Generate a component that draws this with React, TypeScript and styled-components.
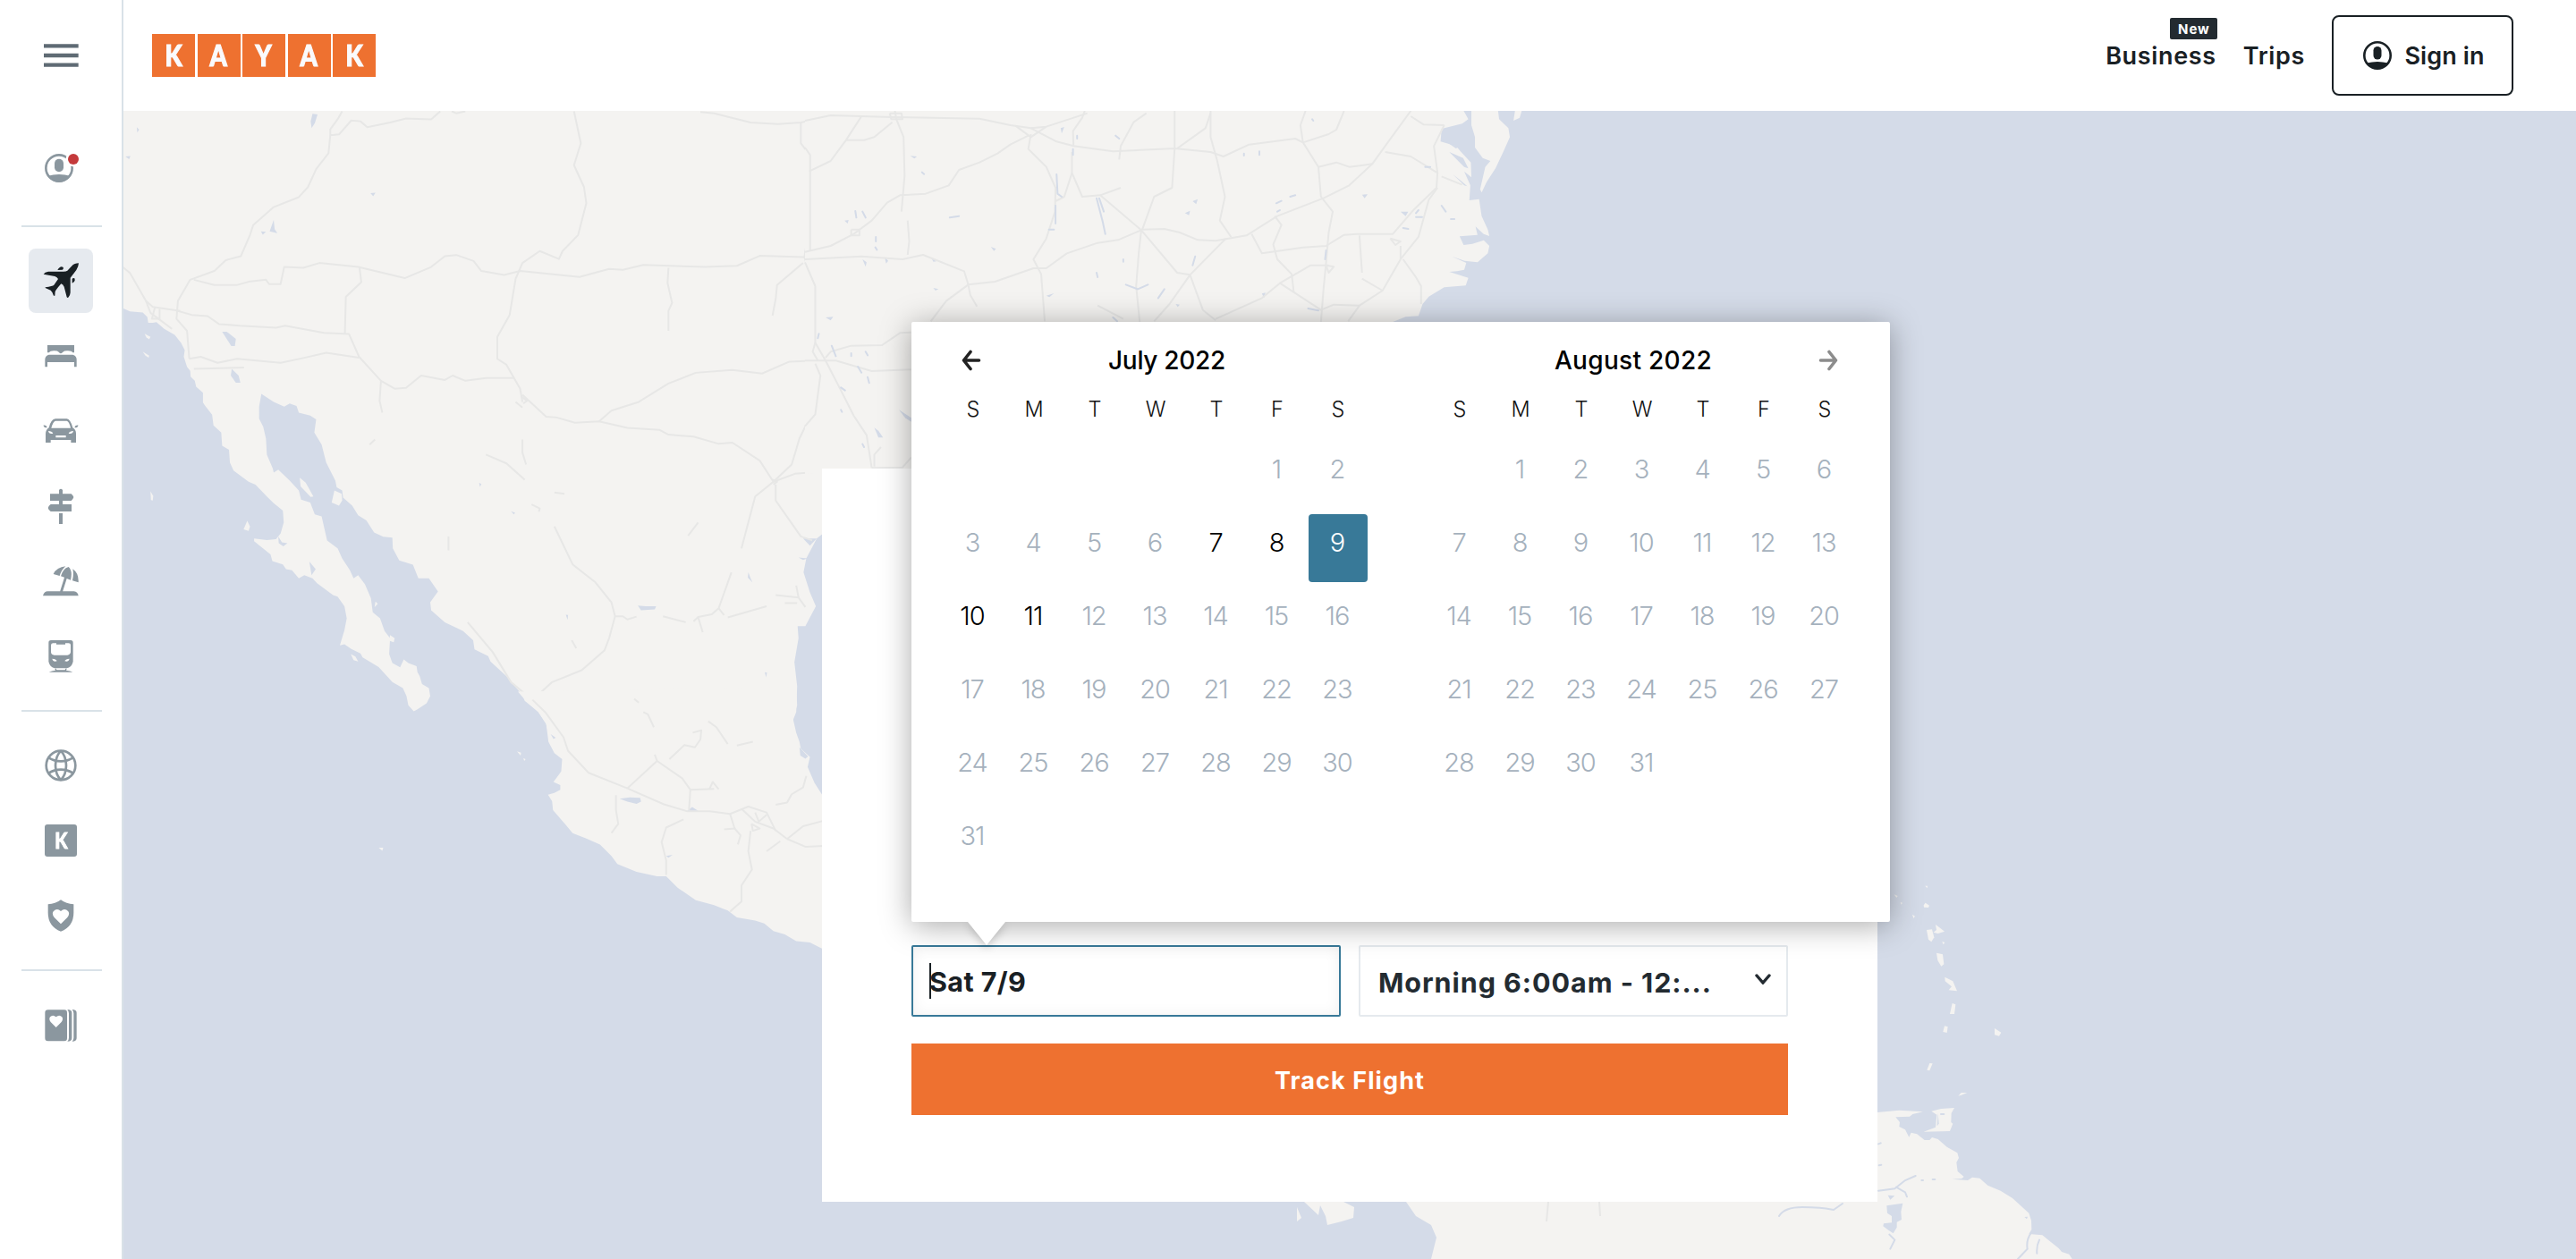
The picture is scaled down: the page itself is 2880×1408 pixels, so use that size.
import React from "react";
import styled, { createGlobalStyle } from "styled-components";

const GlobalStyle = createGlobalStyle`
  *, *::before, *::after { box-sizing: border-box; }
  html, body { margin: 0; padding: 0; background: #fff; }
  body { font-family: Inter, "Liberation Sans", sans-serif; color: #192024; }
  button, a, input { font-family: inherit; color: inherit; text-decoration: none; }
`;

const slate = "#8b979f";

/* ---------- shell ---------- */

const Page = styled.div`
  display: flex;
  width: 2880px;
  height: 1408px;
  overflow: hidden;
`;

const Sidebar = styled.nav`
  flex: none;
  width: 138px;
  border-right: 2px solid #d9e2e8;
  background: #fff;
  display: flex;
  flex-direction: column;
  align-items: center;
`;

const MenuButton = styled.button`
  display: flex;
  align-items: center;
  justify-content: center;
  width: 72px;
  height: 72px;
  margin: 26px 0 54px;
  padding: 0;
  border: 0;
  background: none;
`;

const NavItem = styled.a<{ $active?: boolean }>`
  display: flex;
  align-items: center;
  justify-content: center;
  width: 72px;
  height: 72px;
  border-radius: 8px;
  color: ${(p) => (p.$active ? "#192024" : slate)};
  background: ${(p) => (p.$active ? "#e6eaef" : "transparent")};
`;

const NavGroup = styled.div`
  display: flex;
  flex-direction: column;
  gap: 12px;
`;

const Rule = styled.hr<{ $top?: number }>`
  width: 90px;
  height: 2px;
  flex: none;
  margin: ${(p) => p.$top ?? 24}px 0 24px 2px;
  border: 0;
  background: #d9e2e8;
`;

const Glyph = styled.svg`
  display: block;
  width: 40px;
  height: 40px;
  fill: currentColor;
`;

const Letter = styled.b<{ $stroke: number }>`
  display: block;
  font-weight: 900;
  transform: scaleX(0.86);
  -webkit-text-stroke: ${(p) => p.$stroke}px currentColor;
`;

const LetterTile = styled.span`
  display: flex;
  align-items: center;
  justify-content: center;
  width: 36px;
  height: 36px;
  border-radius: 3px;
  background: ${slate};
  color: #fff;
  font: 900 24px/36px Lato, sans-serif;
`;

const Main = styled.div`
  flex: 1;
  display: flex;
  flex-direction: column;
`;

/* ---------- header ---------- */

const Header = styled.header`
  flex: none;
  display: flex;
  align-items: center;
  justify-content: space-between;
  height: 124px;
  padding: 0 70px 0 32px;
  background: #fff;
`;

const Logo = styled.a`
  display: flex;
  gap: 2.5px;
`;

const LogoTile = styled.span`
  display: flex;
  align-items: center;
  justify-content: center;
  width: 48px;
  height: 48px;
  background: #ee7130;
  color: #fafafc;
  font: 900 32px/48px Lato, sans-serif;
`;

const HeaderNav = styled.div`
  display: flex;
  align-items: center;
`;

const HeaderLink = styled.a`
  position: relative;
  margin-right: 30px;
  padding-top: 2px;
  font-size: 27px;
  font-weight: 600;
  line-height: 40px;
  letter-spacing: 0.65px;
`;

const NewBadge = styled.span`
  position: absolute;
  right: -1px;
  top: -21px;
  padding: 0 8px 0 9px;
  height: 24px;
  border-radius: 2px;
  background: #232b31;
  color: #fff;
  font-size: 15px;
  font-weight: 700;
  line-height: 25px;
  letter-spacing: 0.9px;
`;

const SignIn = styled.button`
  display: flex;
  align-items: center;
  justify-content: center;
  gap: 14px;
  width: 203px;
  height: 90px;
  padding: 0 0 0 3px;
  border: 2px solid #192024;
  border-radius: 8px;
  background: #fff;
  font-size: 27px;
  font-weight: 600;
  letter-spacing: 0.1px;
`;

const SignInIcon = styled.svg`
  width: 32px;
  height: 32px;
  flex: none;
`;

/* ---------- map ---------- */

const Stage = styled.main`
  position: relative;
  flex: 1;
  display: flex;
  justify-content: center;
  align-items: flex-start;
  padding-top: 400px;
  overflow: hidden;
  background: #d4dbe8;
`;

const MapCanvas = styled.svg`
  position: absolute;
  inset: 0;
  width: 2742px;
  height: 1284px;
  .land { fill: #f4f3f1; }
  .water { fill: #d4dbe8; }
  .road { fill: none; stroke: #e7e7e6; stroke-width: 2px; stroke-linejoin: round; vector-effect: non-scaling-stroke; }
  .stream { fill: none; stroke: #d4dbe8; stroke-width: 2px; stroke-linecap: round; vector-effect: non-scaling-stroke; }
`;

/* ---------- form ---------- */

const Card = styled.section`
  position: relative;
  width: 1180px;
  height: 820px;
  padding: 533px 100px 0;
  background: #fff;
`;

const Fields = styled.div`
  display: flex;
  gap: 20px;
  margin-bottom: 30px;
`;

const FieldWrap = styled.div`
  position: relative;
  width: 480px;
`;

const DateBox = styled.div`
  display: flex;
  align-items: center;
  height: 80px;
  padding: 0 18px;
  border: 2px solid #387998;
  border-radius: 2px;
  background: #fff;
  box-shadow: inset 0 0 16px rgba(0, 0, 0, 0.06);
  font-size: 30.5px;
  font-weight: 700;
  letter-spacing: 0.4px;
`;

const Caret = styled.i`
  width: 2px;
  height: 40px;
  margin-right: -2px;
  background: #192024;
`;

const SelectBox = styled.div`
  display: flex;
  align-items: center;
  justify-content: space-between;
  width: 480px;
  height: 80px;
  padding: 3px 17px 0 20px;
  border: 2px solid #e5eaee;
  border-radius: 2px;
  font-size: 30.5px;
  font-weight: 700;
  letter-spacing: 0.95px;
  color: #232b31;
  white-space: nowrap;
`;

const Chevron = styled.svg`
  width: 18px;
  height: 12px;
  margin-top: -7px;
`;

const Submit = styled.button`
  display: block;
  width: 980px;
  height: 80px;
  padding: 2px 0 0;
  border: 0;
  background: #ee7130;
  color: #fff;
  font-size: 27px;
  font-weight: 700;
  letter-spacing: 1.1px;
`;

/* ---------- calendar ---------- */

const Popup = styled.div`
  position: absolute;
  left: 0;
  bottom: 106px;
  z-index: 2;
  display: flex;
  gap: 68px;
  width: 1094px;
  height: 671px;
  padding: 23px 39px 0 35px;
  border-radius: 2px;
  background: #fff;
  box-shadow: 0 4px 34px rgba(0, 0, 0, 0.34);
`;

const Pointer = styled.svg`
  position: absolute;
  left: 63px;
  bottom: -26px;
  width: 42px;
  height: 26px;
  overflow: visible;
  filter: drop-shadow(0 3px 5px rgba(0, 0, 0, 0.2));
  clip-path: polygon(-40px 0, 82px 0, 82px 60px, -40px 60px);
`;

const Month = styled.div`
  width: 476px;
`;

const MonthBar = styled.div<{ $side: "left" | "right" }>`
  display: flex;
  flex-direction: ${(p) => (p.$side === "left" ? "row" : "row-reverse")};
  align-items: center;
  height: 40px;
  padding: ${(p) => (p.$side === "left" ? "0 18px 0 21px" : "0 19px 0 21px")};
`;

const MonthName = styled.h3<{ $wide?: boolean }>`
  flex: 1;
  margin: 0;
  font-size: 28px;
  font-weight: 500;
  letter-spacing: ${(p) => (p.$wide ? 0.3 : -0.3)}px;
  color: #000;
  text-align: center;
`;

const ArrowIcon = styled.svg<{ $muted?: boolean }>`
  width: 22px;
  height: 24px;
  flex: none;
  fill: none;
  stroke: ${(p) => (p.$muted ? "#8c8c8c" : "#222")};
  stroke-width: 3.6px;
  stroke-linecap: round;
  stroke-linejoin: round;
`;

const WeekRow = styled.div`
  display: grid;
  grid-template-columns: repeat(7, 68px);
  height: 70px;
  padding-top: 20px;
  color: #111;
  font-size: 23.5px;
  font-weight: 300;
  line-height: 30px;
  text-align: center;
`;

const Days = styled.div`
  display: grid;
  grid-template-columns: repeat(7, 68px);
  grid-auto-rows: 76px;
  row-gap: 6px;
`;

type Tone = "muted" | "open" | "picked";

const Day = styled.span<{ $tone: Tone }>`
  margin: 0 1px;
  padding: 12px 2px 0 0;
  border-radius: 4px;
  background: ${(p) => (p.$tone === "picked" ? "#387998" : "transparent")};
  color: ${(p) => (p.$tone === "picked" ? "#fff" : p.$tone === "open" ? "#000" : "#a5b1bd")};
  font-size: 29px;
  font-weight: 300;
  line-height: 40px;
  letter-spacing: -1px;
  text-align: center;
`;

const WEEK = ["S", "M", "T", "W", "T", "F", "S"];

function Calendar(props: { name: string; offset: number; count: number; open?: number[]; picked?: number; side: "left" | "right" }) {
  const { name, offset, count, open = [], picked, side } = props;
  return (
    <Month>
      <MonthBar $side={side}>
        <ArrowIcon viewBox="0 0 22 24" $muted={side === "right"}>
          {side === "left" ? <path d="M19.5 12H2.5M10 2.5L2.5 12l7.500 9.500" /> : <path d="M2.500 12h17M12 2.500l7.500 9.500-7.500 9.500" />}
        </ArrowIcon>
        <MonthName $wide={side === "right"}>{name}</MonthName>
      </MonthBar>
      <WeekRow>{WEEK.map((d, i) => <span key={i}>{d}</span>)}</WeekRow>
      <Days>
        {Array.from({ length: offset }, (_, i) => <span key={"b" + i} />)}
        {Array.from({ length: count }, (_, i) => i + 1).map((n) => (
          <Day key={n} $tone={n === picked ? "picked" : open.includes(n) ? "open" : "muted"}>{n}</Day>
        ))}
      </Days>
    </Month>
  );
}

/* ---------- icons ---------- */

const icons: Record<string, React.ReactNode> = {
  flights: (
    <>
      <path d="M120 1Q106 1 96 11L82 26Q78 29 69 29H18Q6 31 2 38L40 45Q48 48 51 54L37 74Q33 78 8 82V84L26 92Q32 97 36 110H40L41 97Q42 92 61 70Q68 72 71 80L80 115Q83 119 86 115Q91 110 92 100V50L112 24Q119 14 120 1Z" />
      <path d="M49 24Q56 13 62 13 69 13 69 18L66 23ZM98 68V53Q102 50 106 52 109 58 105 63Z" />
    </>
  ),
  stays: <path d="M15 24H105V49H100Q97 43 84 43 72 42 67 47 62 52 60 52 57 52 53 47 48 42 36 43 24 43 20 49H15ZM20 56H100Q113 60 113 72V97H105V81H15V97H7V72Q7 60 20 56Z" />,
  cars: <path fillRule="evenodd" d="M20 49Q27 20 42 19H80Q92 20 100 49 111 56 111 68V99H94V90H26V99H9V70Q9 56 20 49ZM28 50H93Q88 28 80 26H42Q34 28 28 50ZM18 60Q20 71 34 68 30 60 18 60ZM102 60Q100 71 86 68 90 60 102 60ZM43 75V82H77V75ZM1 41Q12 38 14 48 6 52 1 41ZM119 41Q108 38 106 48 114 52 119 41Z" />,
  explore: <path d="M54 6Q60-2 66 6V19H95Q102 25 103 30 101 37 95 42H66V54H96V78H26Q18 72 17 66 19 59 26 54H54V42H24V19H54ZM54 84H66V120H54Z" />,
  packages: <path d="M35 36Q46 13 76 10 62 22 56 42ZM60 43Q67 17 86 12 100 24 93 56L80 51 66 95H57L72 47ZM99 58Q104 36 100 19 121 34 119 64ZM0 109Q4 94 16 94H104Q117 96 119 109Z" />,
  trains: <path fillRule="evenodd" d="M27 6H93Q101 6 101 14V78Q96 98 80 100H40Q24 98 19 78V14Q19 6 27 6ZM27 22V46Q28 56 38 56H82Q92 55 93 46V22Q93 16 86 16H75V20H45V16H34Q28 16 27 22ZM31 68Q34 80 47 76 44 68 31 68ZM89 68Q86 80 73 76 76 68 89 68ZM20 113Q30 108 42 107L40 101H44L46 106H74L76 101H80L78 107Q92 108 100 113Z" />,
  globe: (
    <g fill="none" stroke="currentColor" strokeWidth="8">
      <circle cx="60" cy="60" r="49" />
      <path d="M60 11Q42 30 42 60T60 109M60 11Q78 30 78 60T60 109M19 34Q38 46 60 46T101 34M19 86Q38 74 60 74T101 86" />
    </g>
  ),
  shield: <path fillRule="evenodd" d="M60 7Q78 21 103 22V50Q103 96 60 113 17 96 17 50V22Q42 21 60 7ZM60 88L82 66Q91 55 85 46 73 33 60 45 47 33 35 46 29 55 38 66Z" />,
  trips: <path fillRule="evenodd" d="M17 10H72Q81 10 81 20V105Q81 115 72 115H17Q7 115 7 105V20Q7 10 17 10ZM44 69L62 51Q69 42 64 34 55 24 44 34 33 24 24 34 19 42 26 51ZM82 9Q97 9 97 20V105Q97 116 82 116 87 110 87 104V22Q87 15 82 9ZM98 9Q113 9 113 20V105Q113 116 98 116 103 110 103 104V22Q103 15 98 9Z" />,
};

function Icon({ name }: { name: string }) {
  return <Glyph viewBox="0 0 120 120">{icons[name]}</Glyph>;
}

function AccountIcon() {
  return (
    <Glyph viewBox="0 0 120 120">
      <circle cx="54" cy="60" r="44" fill="none" stroke="currentColor" strokeWidth="8" />
      <rect x="39" y="29" width="30" height="44" rx="15" />
      <path d="M17 86Q34 81 54 81T91 86Q78 107 54 107T17 86Z" />
      <circle cx="102" cy="30" r="25" fill="#fff" />
      <circle cx="102" cy="30" r="18" fill="#c43a3b" />
    </Glyph>
  );
}

/* ---------- map geometry ---------- */

const pts = (list: string) => list.trim().split(/\s+/).join(" ");

interface Sheet {
  transform: string;
  land: string[];
  water: string[];
  roads: string[];
  streams?: string;
}

const sheets: Sheet[] = [
  {
    transform: "translate(130 120) scale(.5102 .44643)",
    land: [
      "14,0 14,503 30,511 58,514 68,525 70,540 80,540 88,538 105,555 128,570 142,590 150,608 148,625 155,650 162,660 163,675 172,685 175,700 190,715 190,740 195,748 210,770 213,797 230,815 232,848 247,858 249,890 257,910 290,938 305,945 330,975 345,992 365,1010 367,1040 360,1068 350,1082 330,1084 302,1080 302,1087 338,1120 342,1137 365,1145 372,1157 385,1160 400,1180 412,1172 430,1180 440,1192 475,1222 485,1226 500,1250 505,1280 500,1310 490,1348 500,1345 515,1357 535,1368 540,1378 575,1402 605,1440 628,1455 636,1475 640,1498 652,1513 660,1508 680,1493 688,1475 685,1455 670,1445 665,1425 660,1415 658,1400 640,1392 630,1383 622,1403 605,1392 598,1370 600,1330 588,1312 578,1280 562,1265 558,1230 545,1195 530,1172 520,1180 512,1160 495,1130 485,1105 462,1085 455,1050 450,1025 435,1020 425,990 405,983 400,960 380,935 355,908 345,915 343,905 330,870 328,830 322,800 313,780 313,750 318,718 345,738 368,750 380,742 395,748 400,765 425,772 438,782 434,815 450,845 460,890 480,935 483,952 495,960 497,978 517,998 530,1022 548,1035 565,1065 585,1076 605,1078 606,1105 620,1135 650,1146 662,1180 685,1180 705,1213 688,1240 690,1260 720,1290 760,1312 782,1335 785,1358 815,1375 820,1388 855,1425 890,1472 895,1487 925,1515 942,1545 947,1570 1485,1570 1483,1535 1490,1515 1492,1450 1486,1390 1495,1330 1493,1300 1510,1300 1533,1250 1520,1215 1506,1165 1512,1130 1535,1080 1568,1050 1568,0",
      "62,567 75,575 72,581 66,576",
      "58,612 72,622 71,627 64,622",
      "75,962 81,974 80,985 76,984",
      "287,1036 293,1050 290,1061 279,1057",
      "402,928 415,940 432,975 426,976 404,950",
      "478,960 494,968 495,985 488,998 472,990",
      "568,1238 573,1244 566,1252",
      "600,1322 610,1330 608,1340 598,1336",
      "514,1370 524,1376 530,1388 520,1385",
    ],
    water: [
      "430,16 441,18 435,40 428,52 426,35",
      "232,562 242,562 262,580 260,598 252,598",
      "253,655 268,672 272,690 262,690 251,672",
      "355,1075 363,1090 375,1092 366,1100 356,1092",
      "423,1138 437,1157 428,1172",
      "1143,1248 1160,1250 1183,1250 1180,1258 1150,1260",
      "345,282 347,305 353,315 336,311",
      "317,311 328,312 321,319",
      "1505,1080 1535,1080 1520,1098",
      "1495,1128 1515,1130 1505,1134",
      "795,940 800,944 797,951",
      "865,1012 874,1016 871,1020",
      "1385,1165 1390,1180 1394,1190 1384,1178",
      "985,1271 990,1272 989,1284",
      "1421,1415 1426,1416 1424,1428",
      "20,123 31,122 28,130",
      "45,50 50,56 46,63",
      "557,215 568,214 563,223",
    ],
    roads: [
      "495,10 485,30 469,55 469,70 488,68 515,33 535,35 550,50 600,38 635,28 690,30 710,10",
      "469,70 465,115 438,155 420,200 400,225 345,250 300,295 293,320 273,373 240,383 215,410 162,432 135,485 132,530 155,560 160,630",
      "170,432 215,445 265,445 290,437 328,432 335,443 360,443 368,400 410,402 445,390 530,400 632,428 690,400 720,373 745,370 783,385 800,410 850,420 885,410 1015,425 1080,405 1110,407 1155,395 1290,400 1360,397 1410,372 1505,375 1568,383",
      "1003,10 1018,90 1003,145 1025,200 1030,240 1012,320 978,360 970,380 928,360 890,390 875,430 862,520 835,575 835,630 855,645 885,705 890,738",
      "533,402 537,438 503,475 501,567",
      "135,510 165,520 200,523 225,543 270,547 350,552 370,547 455,565 510,568 532,625 580,685 577,735 583,765",
      "160,630 185,625 222,640 265,630 360,640 410,628 460,615 532,627",
      "580,685 610,705 635,703 668,672 720,683 737,672 765,685 810,678 870,678",
      "890,720 942,775 965,777 1005,790 1058,787 1120,803 1190,808 1210,820 1265,825 1320,843 1350,840 1410,885 1440,938 1487,918 1550,912",
      "1058,787 1085,760 1145,738 1210,692 1270,665 1350,658 1415,667 1475,637 1568,633",
      "1440,938 1400,975 1385,1040 1370,1105",
      "1445,945 1445,985 1500,1075 1525,1085",
      "1440,938 1480,895 1497,830 1535,740 1537,700 1522,650 1532,595 1532,470 1508,375 1520,290 1520,120 1500,90 1500,40",
      "1538,700 1552,680 1555,630 1532,590",
      "1520,160 1545,145 1568,120",
      "1508,362 1568,346",
      "1280,12 1310,15 1390,38 1450,42 1500,38 1568,22",
      "735,10 745,15 765,10",
      "1210,402 1208,440 1218,490 1210,510 1210,560",
      "1505,390 1448,445 1445,480 1438,522",
      "960,1050 1000,1145 1050,1190 1085,1240 1093,1275 1110,1275 1120,1283 1140,1276",
      "1093,1275 1080,1330 1070,1360 1020,1410 955,1440 912,1485",
      "1265,1288 1275,1277 1305,1270 1320,1255 1348,1165",
      "1275,1277 1285,1315",
      "1320,1255 1332,1272",
      "1198,1275 1248,1290",
      "1340,1278 1425,1250",
      "1445,1222 1495,1228 1510,1252",
      "1465,1242 1492,1242",
      "1490,1198 1495,1228",
      "770,1290 825,1365 865,1440 912,1485",
      "14,400 30,415 65,485 80,500 140,510",
      "65,485 75,515 122,555",
      "85,500 78,530 95,530 95,505",
      "170,655 280,652",
      "810,870 855,892 895,933",
      "890,832 890,865 898,895",
      "910,995 928,1005 926,1013",
      "960,965 982,968",
      "1253,1073 1275,1040",
      "728,1075 728,1110",
      "875,738 890,752",
      "555,845 567,832",
      "998,1335 1008,1355",
      "888,725 900,735 892,742",
      "1437,932 1448,938 1440,945",
    ],
  },
  {
    transform: "translate(130 600) scale(.5102)",
    land: [
      "880,340 895,357 925,385 942,410 947,450 960,475 977,488 975,515 958,538 973,545 973,555 960,562 946,566 955,580 957,600 985,632 1000,650 1030,662 1060,675 1085,700 1098,718 1140,735 1185,745 1205,745 1230,770 1270,797 1310,808 1340,820 1360,835 1400,842 1420,848 1440,865 1465,872 1490,887 1520,890 1550,905 1560,905 1560,580 1546,565 1530,540 1515,505 1520,483 1500,465 1497,450 1490,430 1483,400 1492,370 1490,330",
      "878,471 887,474 886,480",
      "892,486 897,488 894,492",
      "575,682 585,682 583,689",
    ],
    water: [
      "1103,575 1125,572 1148,573 1150,581 1140,586 1120,581",
      "1250,602 1262,593 1278,603",
      "1497,462 1516,482 1510,487 1499,480",
      "1205,700 1219,698 1210,704",
      "952,433 963,441 958,444",
    ],
    roads: [
      "912,358 940,385 980,440 990,470 1035,518 1120,552 1200,587 1250,602 1300,602 1345,608 1385,592 1425,605 1445,645",
      "1120,552 1185,492 1180,478",
      "1185,492 1240,530 1258,555 1310,553",
      "1258,555 1255,600",
      "1212,488 1245,457 1268,462 1280,445 1282,425 1263,430",
      "1345,608 1355,640 1332,642",
      "1370,597 1400,625 1440,640 1470,663",
      "1392,630 1410,640 1395,645 1392,630",
      "1390,645 1385,690 1393,730 1370,765 1370,800 1345,822",
      "1470,663 1505,635 1550,623",
      "1470,663 1510,680 1550,678",
      "1445,588 1470,583 1480,565 1505,550 1512,525",
      "1425,690 1455,668",
      "1205,742 1205,710 1195,670 1205,638 1243,620",
      "1095,567 1095,600 1100,630 1085,650",
      "1297,405 1315,418 1340,455",
      "1360,458 1395,450",
      "1155,385 1165,390 1178,418",
      "1135,356 1145,364",
      "1300,553 1307,538 1320,554",
      "1400,605 1408,625 1425,610",
      "1355,640 1368,655 1362,675",
    ],
  },
  {
    transform: "translate(900 120) scale(.57398 .33333)",
    land: [
      "0,0 1290,0 1283,12 1292,40 1280,55 1240,72 1238,115 1268,130 1278,150 1297,185 1298,235 1284,215 1296,262 1294,312 1313,308 1318,365 1330,410 1333,432 1322,425 1306,400 1310,428 1275,433 1283,462 1300,458 1322,446 1333,465 1330,490 1310,520 1285,515 1260,500 1288,522 1284,545 1270,550 1255,552 1292,572 1287,598 1245,604 1215,635 1203,660 1195,700 1170,703 1145,720 1000,1200 0,1230",
      "1298,12 1298,60 1305,100 1305,135 1320,170 1335,180 1325,200 1315,275 1318,286 1328,250 1345,205 1360,150 1373,100 1370,70 1352,40 1350,12",
      "1383,12 1380,45 1392,35 1396,12",
    ],
    water: [
      "1240,105 1262,125 1275,132 1268,138",
      "1255,150 1282,170 1292,205 1284,200",
      "1262,225 1280,250 1290,265 1284,262",
      "1160,350 1175,350 1170,365",
      "755,315 765,308 762,325",
      "740,355 750,347 748,362",
      "40,705 55,703 50,715",
      "183,1015 207,1042 207,1055 195,1042",
      "135,1075 143,1085 152,1108 143,1108",
      "205,163 218,165 213,172",
      "1085,293 1096,292 1090,305",
      "722,660 730,662 726,670",
      "890,625 897,622 894,640",
      "498,70 505,66 500,88",
      "470,632 485,624 476,637",
      "77,380 85,378 83,390",
      "112,510 120,520 118,535",
      "155,502 162,515 158,524",
      "246,505 256,517 250,518",
      "250,606 260,610 254,615",
      "362,468 372,475 368,482",
    ],
    roads: [
      "0,45 50,27 170,33 340,38 400,60 440,70 470,65 550,20",
      "410,62 440,100 470,65",
      "175,12 178,40 192,100 194,230 188,350",
      "165,20 168,40 190,40 188,20 165,20",
      "200,380 203,450 200,495",
      "0,485 50,465 95,425 130,380 160,320 185,295 235,290 280,262 300,210 340,185 375,155 400,125 435,95",
      "110,30 80,110 115,110 135,100 170,50",
      "80,110 50,180 8,215",
      "0,135 10,160 10,480",
      "90,410 106,410 106,430 90,430 90,410",
      "0,510 110,500 190,510 230,495 310,550 318,595 370,585 445,540 470,540 510,490 570,455 610,445 655,412 650,490 645,600 652,720",
      "318,595 275,650 245,718",
      "318,595 322,630 335,668",
      "440,90 435,140 470,200 488,270 487,350 470,440 445,510 460,560 467,718",
      "545,12 540,35 522,80 523,130 600,148 720,138 790,150 815,165 865,125 955,105 970,118 1020,90 1035,75 1050,12",
      "440,70 490,115 523,130",
      "665,20 640,50 615,130 612,175",
      "720,12 720,138 715,270 680,300 657,410",
      "725,138 780,70 790,20",
      "575,295 655,412 725,555 750,562 775,680 800,715",
      "655,410 700,408 730,420 765,445 800,448 860,430 920,365 1010,305 1060,262 1105,190 1130,130 1180,12",
      "830,435 808,380 818,300 803,180 790,100 790,12",
      "820,440 750,562 710,660 680,718",
      "870,425 890,490 970,470 1015,465 1050,428 1075,425 1145,425 1185,345 1230,270 1232,220 1180,165 1130,150",
      "1232,220 1225,130 1245,60",
      "975,12 965,60 970,118 1000,200 1005,300 1028,350 1020,420 1015,520 1010,610 1005,720",
      "915,365 928,395 912,460 920,510 948,560 952,620",
      "1020,530 985,530 925,590 890,640 800,710",
      "925,590 1005,680 1030,662 1080,665 1125,615 1160,510 1195,435 1215,310 1232,270",
      "1080,665 1058,718",
      "1165,510 1190,570 1200,600 1200,660",
      "1080,430 1085,555",
      "1085,575 1125,615",
      "1140,440 1160,450 1150,462 1140,440",
      "1160,465 1160,510",
      "1015,530 1030,535 1020,555 1015,530",
      "520,150 520,220 540,300 575,295 615,270",
      "520,220 505,300 488,315",
      "570,665 620,710",
      "1000,200 1035,185 1060,200 1105,190",
      "1180,30 1205,58 1245,60",
      "1240,232 1280,260",
      "0,520 20,600 20,790 40,850 70,950 95,1035 120,1100 130,1210",
      "0,850 60,850 130,885 207,880",
      "40,840 50,820 90,800 150,798 185,757 207,755",
      "20,860 30,900 20,1030 0,1070",
      "20,790 15,820 25,850",
      "130,1210 190,1208 207,1175",
      "135,1205 135,1165 148,1140",
    ],
    streams: "M568 305L580 385L585 425M573 305L582 350M490 225L492 290L500 300M488 330V390M475 410H485M625 595L648 610L668 595M700 610L688 640M760 500L755 530M568 555L570 570M1015 480L1013 510M945 300L955 295M918 322L928 314M920 350L925 345M52 800L60 835M90 825V835M118 820L122 832M27 760L25 775M103 870L110 890M122 905L125 925M138 435V450M137 470L140 478M98 348L100 370M112 350L118 370M282 370L300 365M228 218L232 224M522 140V160M988 40L990 45M1208 200H1218M1240 330L1248 350M1258 375H1265M1195 345L1190 355M1202 368H1190M530 95V105M605 95L612 105M980 675L1000 682M70 940L78 950M70 1015L72 1022M112 1130L115 1140M600 705L608 718M885 148V160M855 155V162M620 510V518M1165 405L1175 408",
  },
  {
    transform: "translate(2050 960) scale(.33333)",
    land: [
      "0,1180 0,852 147,852 220,845 300,850 265,858 255,866 208,868 222,885 220,900 240,910 253,935 260,920 280,925 305,945 322,945 330,936 350,942 380,968 415,988 420,1005 412,1020 416,1050 437,1068 430,1074 397,1076 450,1080 465,1070 490,1073 517,1097 560,1115 600,1140 655,1190 663,1215 664,1245 655,1260 700,1264 755,1308 765,1320 790,1328 800,1344 0,1344",
      "328,848 360,840 405,837 395,855 394,885 400,890 390,915 302,917 342,902 346,860",
      "312,240 330,238 337,265 328,280 318,272",
      "342,222 355,232 372,245 350,252 335,248 345,240",
      "345,317 366,322 370,355 361,362 349,342",
      "373,398 400,412 414,445 386,442 396,430 374,412",
      "398,486 409,490 405,522 390,522",
      "372,562 383,565 380,585 367,582",
      "322,687 332,688 322,712 313,710",
      "540,570 562,584 555,596 540,592",
      "418,797 428,786 448,786 432,793",
      "302,157 308,149 321,158 318,165 303,164",
      "307,92 315,92 314,100",
      "203,121 215,126 211,132",
      "224,147 231,149 227,155",
      "264,188 273,194 268,201",
      "364,279 373,282 368,289",
    ],
    water: [
      "178,1165 210,1160 232,1157 226,1185 228,1212 212,1220 212,1238 200,1258 185,1248 166,1234 168,1225 195,1222 195,1200 180,1190",
      "182,1130 205,1132 190,1145",
      "640,1203 651,1202 648,1210",
      "350,855 353,890 347,898",
    ],
    roads: [],
    streams: "M150 1115L205 1108L240 1080L275 1065M210 1103L240 1120L246 1135M187 1262L205 1280L190 1310M663 1255Q645 1280 650 1310L618 1344M690 1280Q680 1300 682 1325M360 858H370M150 958L158 955M152 1030L160 1028M332 1077H340M295 1080H300",
  },
  {
    transform: "",
    land: [
      "1458,1344 1474,1359 1476,1348 1482,1360 1484,1370 1500,1366 1513,1362 1514,1350 1502,1344",
      "1572,1344 1583,1360 1600,1370 1606,1384 1600,1408 2060,1408 2060,1340",
      "1450,1350 1455,1362 1450,1366",
    ],
    water: [],
    roads: ["1731,1344 1729,1366", "1788,1344 1789,1360"],
    streams: "M1989 1360Q1995 1350 2015 1350T2050 1353L2060 1346",
  },
];

function CoastMap() {
  return (
    <MapCanvas viewBox="138 124 2742 1284" aria-hidden="true">
      {sheets.map((s, i) => (
        <g key={i} transform={s.transform || undefined}>
          {s.land.map((p, k) => <polygon key={"l" + k} className="land" points={pts(p)} />)}
          {s.water.map((p, k) => <polygon key={"w" + k} className="water" points={pts(p)} />)}
          {s.roads.map((p, k) => <polyline key={"r" + k} className="road" points={pts(p)} />)}
          {s.streams && <path className="stream" d={s.streams} />}
        </g>
      ))}
    </MapCanvas>
  );
}

/* ---------- app ---------- */

export default function App() {
  return (
    <Page>
      <GlobalStyle />
      <Sidebar>
        <MenuButton aria-label="Menu">
          <Glyph viewBox="0 0 120 120" fill="none">
            <path d="M3 28H119M3 60H119M3 92H119" stroke="#5f6b74" strokeWidth="13" />
          </Glyph>
        </MenuButton>
        <NavItem href="#"><AccountIcon /></NavItem>
        <Rule $top={28} />
        <NavGroup>
          <NavItem href="#" $active><Icon name="flights" /></NavItem>
          {["stays", "cars", "explore", "packages", "trains"].map((n) => (
            <NavItem href="#" key={n}><Icon name={n} /></NavItem>
          ))}
        </NavGroup>
        <Rule />
        <NavGroup>
          <NavItem href="#"><Icon name="globe" /></NavItem>
          <NavItem href="#"><LetterTile><Letter $stroke={0.8}>K</Letter></LetterTile></NavItem>
          <NavItem href="#"><Icon name="shield" /></NavItem>
        </NavGroup>
        <Rule />
        <NavItem href="#"><Icon name="trips" /></NavItem>
      </Sidebar>
      <Main>
        <Header>
          <Logo href="#">
            {"KAYAK".split("").map((c, i) => <LogoTile key={i}><Letter $stroke={1.2}>{c}</Letter></LogoTile>)}
          </Logo>
          <HeaderNav>
            <HeaderLink href="#">Business<NewBadge>New</NewBadge></HeaderLink>
            <HeaderLink href="#">Trips</HeaderLink>
            <SignIn>
              <SignInIcon viewBox="0 0 32 32">
                <circle cx="16" cy="16" r="14.7" fill="none" stroke="#192024" strokeWidth="2.6" />
                <rect x="11.5" y="6" width="9" height="14.5" rx="4.5" fill="#192024" />
                <path d="M4 24.6Q10 23 16 23T28 24.6Q23 31 16 31T4 24.6Z" fill="#192024" />
              </SignInIcon>
              Sign in
            </SignIn>
          </HeaderNav>
        </Header>
        <Stage>
          <CoastMap />
          <Card>
            <Fields>
              <FieldWrap>
                <DateBox><Caret />Sat 7/9</DateBox>
                <Popup>
                  <Calendar name="July 2022" offset={5} count={31} open={[7, 8, 10, 11]} picked={9} side="left" />
                  <Calendar name="August 2022" offset={1} count={31} side="right" />
                  <Pointer viewBox="0 0 42 26"><path d="M0 0H42L21 26Z" fill="#fff" /></Pointer>
                </Popup>
              </FieldWrap>
              <SelectBox>
                <span>Morning 6:00am - 12:...</span>
                <Chevron viewBox="0 0 18 12">
                  <path d="M2 2l7 8 7-8" fill="none" stroke="#232b31" strokeWidth="3.4" strokeLinecap="round" />
                </Chevron>
              </SelectBox>
            </Fields>
            <Submit>Track Flight</Submit>
          </Card>
        </Stage>
      </Main>
    </Page>
  );
}
